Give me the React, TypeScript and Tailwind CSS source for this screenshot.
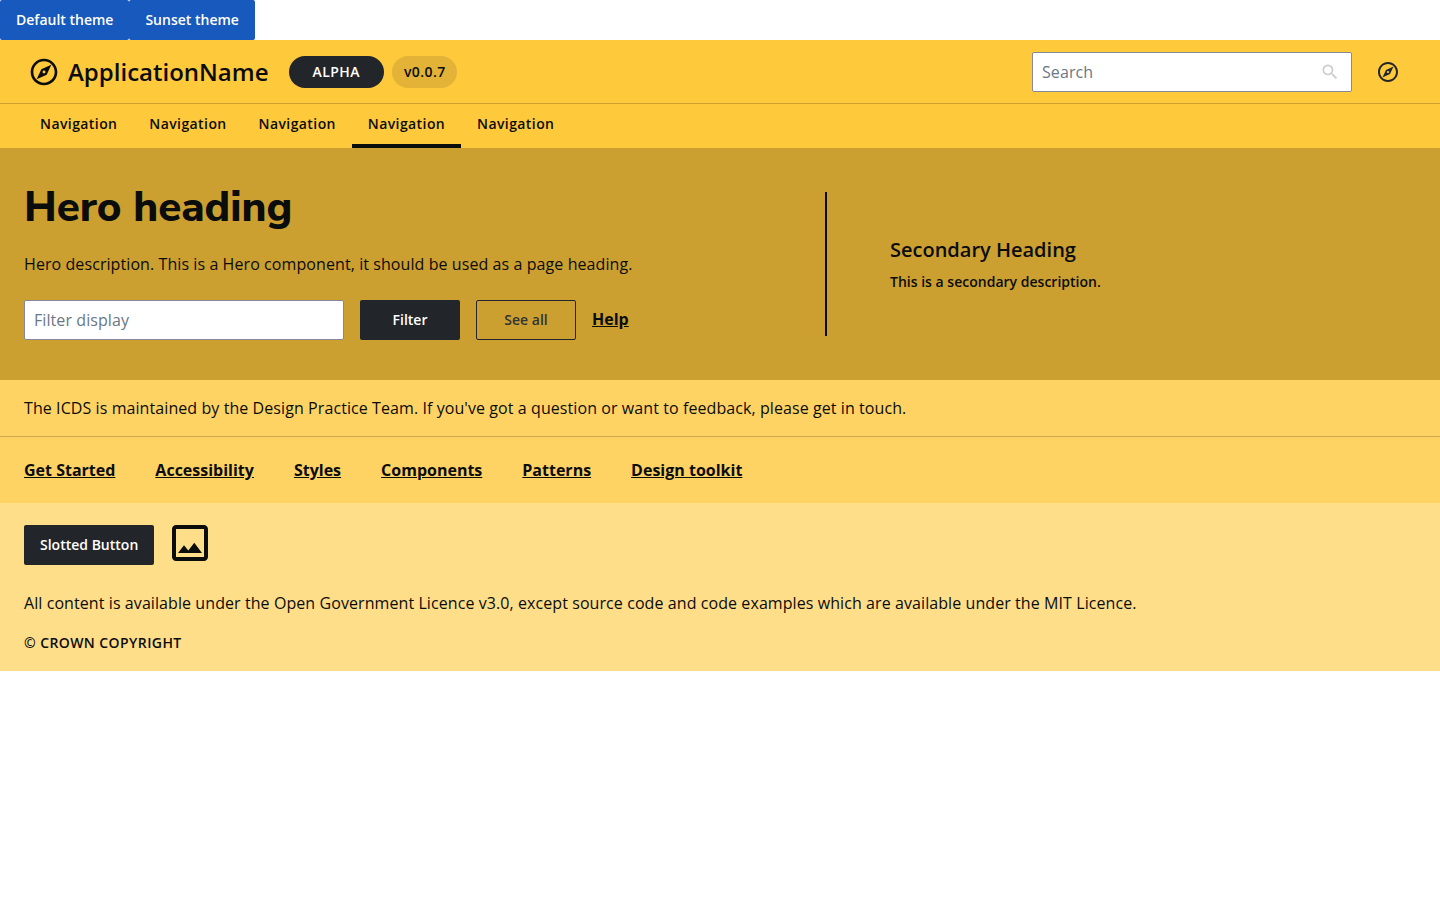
import React from "react";

const navItems = ["Navigation", "Navigation", "Navigation", "Navigation", "Navigation"];
const footerLinks = ["Get Started", "Accessibility", "Styles", "Components", "Patterns", "Design toolkit"];

function CompassIcon({ className }: { className: string }) {
  return (
    <svg viewBox="0 0 24 24" fill="currentColor" className={className}>
      <path d="M12 2C6.48 2 2 6.48 2 12s4.48 10 10 10 10-4.48 10-10S17.52 2 12 2zm0 18c-4.41 0-8-3.59-8-8s3.59-8 8-8 8 3.59 8 8-3.59 8-8 8zm-5.5-2.5l7.51-3.49L17.5 6.5 9.99 9.99 6.5 17.5zm5.5-6.6c.61 0 1.1.49 1.1 1.1s-.49 1.1-1.1 1.1-1.1-.49-1.1-1.1.49-1.1 1.1-1.1z" />
    </svg>
  );
}

function SearchIcon() {
  return (
    <svg viewBox="0 0 24 24" fill="currentColor" className="size-5 text-[#cbcbcb]">
      <path d="M15.5 14h-.79l-.28-.27A6.471 6.471 0 0 0 16 9.5 6.5 6.5 0 1 0 9.5 16c1.61 0 3.09-.59 4.23-1.57l.27.28v.79l5 4.99L20.49 19l-4.99-5zm-6 0C7.01 14 5 11.99 5 9.5S7.01 5 9.5 5 14 7.01 14 9.5 11.99 14 9.5 14z" />
    </svg>
  );
}

function ImageIcon() {
  return (
    <svg viewBox="0 0 24 24" fill="currentColor" className="size-12">
      <path d="M19 5v14H5V5h14m0-2H5c-1.1 0-2 .9-2 2v14c0 1.1.9 2 2 2h14c1.1 0 2-.9 2-2V5c0-1.1-.9-2-2-2zm-4.86 8.86l-3 3.87L9 13.14 6 17h12l-3.86-5.14z" />
    </svg>
  );
}

export default function App() {
  return (
    <div className="font-['Open_Sans',sans-serif] text-base leading-6 text-[#0b0c0c]">
      <div className="flex h-10 text-sm font-semibold text-white">
        <button className="h-10 rounded-[2px] bg-[#1759bc] px-4">Default theme</button>
        <button className="h-10 rounded-[2px] bg-[#1759bc] px-4">Sunset theme</button>
      </div>

      <header className="bg-[#ffc93c]">
        <div className="flex h-16 items-center border-b border-[#cca030] pl-7 pr-10">
          <CompassIcon className="size-8" />
          <span className="ml-2 text-2xl font-semibold">ApplicationName</span>
          <span className="ml-5 flex h-8 w-[95px] items-center justify-center rounded-full bg-[#222529] pl-[0.5px] text-sm font-semibold tracking-[0.42px] text-white">
            ALPHA
          </span>
          <span className="ml-2 flex h-8 w-[65px] items-center rounded-full bg-[#e3b337] pl-[12.4px] text-sm font-semibold tracking-[0.42px]">
            v0.0.7
          </span>
          <div className="ml-auto flex h-10 w-80 items-center rounded-[2px] border border-[#858a96] bg-white pl-[9px] pr-[11px]">
            <input placeholder="Search" className="min-w-0 flex-1 tracking-[0.08px] outline-none placeholder:text-[#6b7786]" />
            <SearchIcon />
          </div>
          <CompassIcon className="ml-6 size-6 text-[#222529]" />
        </div>
        <nav className="flex h-11 pl-6">
          {navItems.map((label, i) => (
            <a
              key={i}
              className={
                "flex h-11 w-[109.25px] items-start border-b-4 px-4 pt-2 text-sm leading-6 font-semibold tracking-[0.42px] " +
                (i === 3 ? "border-[#0b0c0c]" : "border-transparent")
              }
            >
              {label}
            </a>
          ))}
        </nav>
      </header>

      <section className="flex h-[232px] bg-[#cca030] pl-6">
        <div className="w-[801px] pt-[34px]">
          <h1 className="text-[42px] leading-[52px] font-extrabold font-['Nunito_Sans','Nunito','Noto_Sans',sans-serif]">Hero heading</h1>
          <p className="mt-[18px] tracking-[0.08px]">Hero description. This is a Hero component, it should be used as a page heading.</p>
          <div className="mt-6 flex h-10 items-center gap-4">
            <input
              placeholder="Filter display"
              className="h-10 w-80 rounded-[2px] border border-[#858a96] bg-white px-[9px] tracking-[0.08px] outline-none placeholder:text-[#6b7786]"
            />
            <button className="h-10 w-[100px] rounded-[2px] bg-[#222529] text-sm font-semibold text-white">Filter</button>
            <button className="h-10 w-[100px] rounded-[2px] border border-[#222529] text-sm font-semibold text-[#323334]">See all</button>
            <a className="-mt-0.5 font-bold underline">Help</a>
          </div>
        </div>
        <div className="mt-11 flex h-36 flex-col justify-center border-l-2 border-[#0b0c0c] pt-1 pl-[63px]">
          <h2 className="text-xl leading-6 font-semibold">Secondary Heading</h2>
          <p className="mt-2 text-sm leading-6 font-semibold tracking-[0.01px]">This is a secondary description.</p>
        </div>
      </section>

      <footer>
        <div className="flex h-[57px] items-center border-b border-[#cca84f] bg-[#ffd363] px-6 tracking-[0.08px]">
          The ICDS is maintained by the Design Practice Team. If you've got a question or want to feedback, please get in touch.
        </div>
        <div className="flex h-[66px] items-center gap-10 bg-[#ffd363] px-6 font-bold">
          {footerLinks.map((label) => (
            <a key={label} className="underline">{label}</a>
          ))}
        </div>
        <div className="h-[168px] bg-[#ffde8a] px-6 pt-4">
          <div className="flex h-12 gap-3">
            <button className="mt-1.5 h-10 w-[130px] rounded-[2px] bg-[#222529] pl-4 text-left text-sm font-semibold text-white">Slotted Button</button>
            <ImageIcon />
          </div>
          <p className="mt-6 tracking-[0.08px]">
            All content is available under the Open Government Licence v3.0, except source code and code examples which are available under the MIT Licence.
          </p>
          <p className="mt-4 text-sm leading-6 font-semibold tracking-[0.42px]">© CROWN COPYRIGHT</p>
        </div>
      </footer>
    </div>
  );
}
